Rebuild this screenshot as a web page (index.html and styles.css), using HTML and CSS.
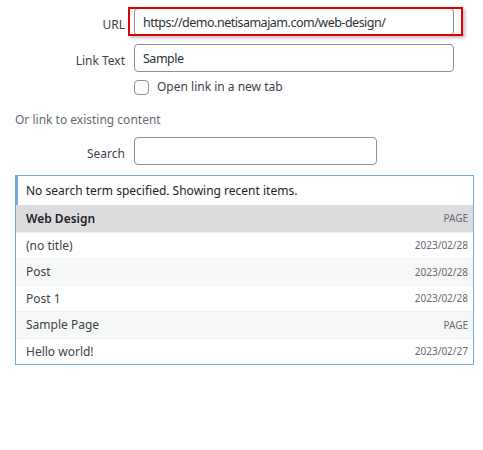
FILE: index.html
```html
<!DOCTYPE html>
<html lang="en">
<head>
  <meta charset="UTF-8">
  <title>Insert link</title>
  <link rel="stylesheet" href="styles.css">
</head>
<body>

  <div class="link-options">
    <div class="field-row">
      <label class="field-label" for="url-field">URL</label>
      <div class="url-wrap">
        <input id="url-field" class="text-input" type="text" value="https://demo.netisamajam.com/web-design/">
        <div class="highlight-box"></div>
      </div>
    </div>
    <div class="field-row">
      <label class="field-label" for="link-text">Link Text</label>
      <input id="link-text" class="text-input" type="text" value="Sample">
    </div>
    <div class="field-row check-row">
      <span></span>
      <label class="check-label"><input type="checkbox" class="check-box"> Open link in a new tab</label>
    </div>
  </div>

  <p class="existing-title">Or link to existing content</p>

  <div class="field-row search-row">
    <label class="field-label" for="search-field">Search</label>
    <input id="search-field" class="text-input search-input" type="search">
  </div>

  <div class="results">
    <div class="notice">No search term specified. Showing recent items.</div>
    <ul class="result-list">
      <li class="selected"><span class="item-title">Web Design</span><span class="item-info">PAGE</span></li>
      <li><span class="item-title">(no title)</span><span class="item-info">2023/02/28</span></li>
      <li class="alt"><span class="item-title">Post</span><span class="item-info">2023/02/28</span></li>
      <li><span class="item-title">Post 1</span><span class="item-info">2023/02/28</span></li>
      <li class="alt"><span class="item-title">Sample Page</span><span class="item-info">PAGE</span></li>
      <li><span class="item-title">Hello world!</span><span class="item-info">2023/02/27</span></li>
    </ul>
  </div>

</body>
</html>
```

FILE: styles.css
```css
body {
  margin: 0;
  padding: 8px 10px 0 15px;
  background-color: #fff;
  color: #3c434a;
  font-family: 'Noto Sans', 'Open Sans', sans-serif;
  font-size: 12px;
}
.link-options {
  display: flex;
  flex-direction: column;
  gap: 8px;
}
.field-row {
  display: grid;
  grid-template-columns: 110px 320px;
  column-gap: 9px;
  align-items: center;
}
.field-label {
  padding-top: 4px;
  text-align: right;
  color: #3c434a;
}
.text-input {
  box-sizing: border-box;
  width: 100%;
  height: 28px;
  margin: 0;
  padding: 0 8px;
  border: 1px solid #8c8f94;
  border-radius: 4px;
  font-family: inherit;
  font-size: 12.5px;
  letter-spacing: -0.5px;
  color: #2c3338;
  background: #fff;
  outline: none;
}
.url-wrap {
  position: relative;
}
.highlight-box {
  position: absolute;
  top: -1px;
  right: -9px;
  bottom: 0;
  left: -6px;
  border: 2px solid #e00000;
  box-shadow: 2px 2px 3px rgba(0, 0, 0, 0.25);
  pointer-events: none;
}
.check-row {
  margin-top: -1px;
}
.check-label {
  display: flex;
  align-items: center;
  gap: 8px;
  line-height: 16px;
}
.check-box {
  appearance: none;
  width: 15px;
  height: 15px;
  margin: 0;
  border: 1px solid #8c8f94;
  border-radius: 4px;
  background: #fff;
}
.existing-title {
  margin: 16px 0 0;
  color: #646970;
  line-height: 18px;
}
.search-row {
  margin-top: 8px;
}
.search-input {
  width: 243px;
}
.results {
  box-sizing: border-box;
  width: 459px;
  margin-top: 10px;
  border: 1px solid #72a9e4;
}
.notice {
  height: 29px;
  line-height: 29px;
  padding-left: 8px;
  border-left: 3px solid #72a9e4;
  margin-left: -1px;
  color: #1d2327;
}
.result-list {
  list-style: none;
  margin: 0;
  padding: 0;
}
.result-list li {
  box-sizing: border-box;
  display: flex;
  justify-content: space-between;
  align-items: center;
  height: 26.5px;
  padding: 0 5px 0 10px;
  border-top: 1px solid #f0f0f1;
  background: #fff;
}
.result-list li:first-child {
  border-top: none;
}
.result-list li.alt {
  background: #f6f7f7;
}
.result-list li.selected {
  background: #dcdcde;
  color: #1d2327;
  font-weight: 600;
}
.item-info {
  font-size: 10px;
  font-weight: 400;
  color: #646970;
}
```
